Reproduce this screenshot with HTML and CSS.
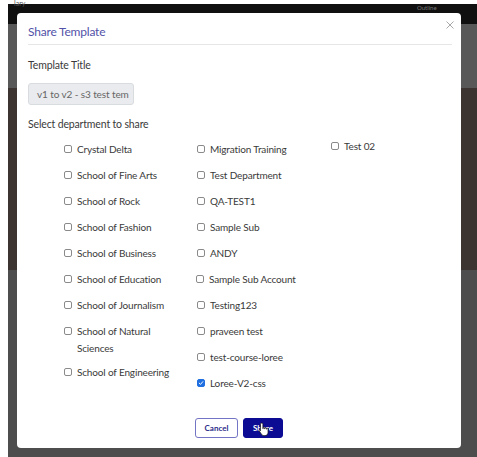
FILE: index.html
```html
<!DOCTYPE html>
<html>
<head>
<meta charset="utf-8">
<link rel="stylesheet" href="styles.css">
</head>
<body>
<div class="screen">
  <div class="top-label">lary</div>
  <div class="outline-label">Outline</div>
  <div class="modal">
    <div class="modal-header">
      <h2 class="modal-title">Share Template</h2>
    </div>
    <span class="close"><svg viewBox="0 0 8 8" width="8" height="8"><path d="M0.5 0.5 L7.5 7.5 M7.5 0.5 L0.5 7.5" stroke="#a8a8a8" stroke-width="1" fill="none"/></svg></span>
    <div class="modal-body">
      <div class="label">Template Title</div>
      <div class="title-input">v1 to v2 - s3 test tem</div>
      <div class="label label-select">Select department to share</div>
      <div class="dept-grid">
        <div class="dept-col">
          <div class="dept"><span class="cb"></span><span class="dept-name">Crystal Delta</span></div>
          <div class="dept"><span class="cb"></span><span class="dept-name">School of Fine Arts</span></div>
          <div class="dept"><span class="cb"></span><span class="dept-name">School of Rock</span></div>
          <div class="dept"><span class="cb"></span><span class="dept-name">School of Fashion</span></div>
          <div class="dept"><span class="cb"></span><span class="dept-name">School of Business</span></div>
          <div class="dept"><span class="cb"></span><span class="dept-name">School of Education</span></div>
          <div class="dept"><span class="cb"></span><span class="dept-name">School of Journalism</span></div>
          <div class="dept dept-wrap"><span class="cb"></span><span class="dept-name">School of Natural Sciences</span></div>
          <div class="dept"><span class="cb"></span><span class="dept-name">School of Engineering</span></div>
        </div>
        <div class="dept-col">
          <div class="dept"><span class="cb"></span><span class="dept-name">Migration Training</span></div>
          <div class="dept"><span class="cb"></span><span class="dept-name">Test Department</span></div>
          <div class="dept"><span class="cb"></span><span class="dept-name">QA-TEST1</span></div>
          <div class="dept"><span class="cb"></span><span class="dept-name">Sample Sub</span></div>
          <div class="dept"><span class="cb"></span><span class="dept-name">ANDY</span></div>
          <div class="dept dept-shift"><span class="cb"></span><span class="dept-name">Sample Sub Account</span></div>
          <div class="dept"><span class="cb"></span><span class="dept-name">Testing123</span></div>
          <div class="dept"><span class="cb"></span><span class="dept-name">praveen test</span></div>
          <div class="dept"><span class="cb"></span><span class="dept-name">test-course-loree</span></div>
          <div class="dept"><span class="cb cb-checked"><svg viewBox="0 0 10 10" width="8" height="8"><path d="M2 5.2 L4.2 7.3 L8 2.8" fill="none" stroke="#fff" stroke-width="1.6" stroke-linecap="round" stroke-linejoin="round"/></svg></span><span class="dept-name">Loree-V2-css</span></div>
        </div>
        <div class="dept-col dept-col-3">
          <div class="dept"><span class="cb"></span><span class="dept-name">Test 02</span></div>
        </div>
      </div>
      <div class="actions">
        <button class="btn btn-cancel">Cancel</button>
        <button class="btn btn-share">Share</button>
        <svg class="cursor" viewBox="0 0 13 17" width="12" height="16"><path d="M4 1 c.8 0 1.3.6 1.3 1.3 V7 h.3 V6.2 c0-.7 1.6-.7 1.6 0 V7.2 h.3 V6.6 c0-.7 1.6-.7 1.6 0 V7.6 h.3 V7.2 c0-.7 1.5-.7 1.5 0 V11 c0 2-1.3 3.6-3.3 3.6 H6.4 c-1.2 0-2-.6-2.7-1.6 L1.2 9.3 c-.4-.6.4-1.4 1-.9 L2.7 9.4 V2.3 C2.7 1.6 3.2 1 4 1z" fill="#fff" stroke="#111" stroke-width="0.8" stroke-linejoin="round"/></svg>
      </div>
    </div>
  </div>
</div>
</body>
</html>
```

FILE: styles.css
```css
html, body {
  margin: 0;
  padding: 0;
  background: #ffffff;
}
body {
  width: 477px;
  height: 457px;
  overflow: hidden;
  font-family: "Lato", "Noto Sans", sans-serif;
}
.screen {
  position: relative;
  margin: 4px 0 0 8px;
  height: 453px;
  padding: 9px 16px 0 9px;
  box-sizing: border-box;
  background: linear-gradient(to bottom,
    #101010 0px, #101010 20px,
    #585858 20px, #585858 84px,
    #3c3431 84px, #3c3431 266px,
    #4d4d4d 266px, #4d4d4d 453px);
}
.top-label {
  position: absolute;
  left: 6px;
  top: -4px;
  font-size: 7px;
  line-height: 7px;
  color: #555;
}
.outline-label {
  position: absolute;
  left: 409px;
  top: 0px;
  font-size: 6px;
  color: #777;
}
.modal {
  position: relative;
  background: #ffffff;
  border-radius: 4px;
  height: 435px;
  padding: 0 9px 0 11px;
  box-sizing: border-box;
}
.modal-header {
  border-bottom: 1px solid #e6e6e6;
  padding: 12px 0 6px 0;
}
.modal-title {
  margin: 0;
  font-size: 12px;
  letter-spacing: -0.2px;
  font-weight: 400;
  line-height: 13px;
  color: #5252a8;
}
.close {
  position: absolute;
  right: 7px;
  top: 8px;
  display: flex;
}
.modal-body {
  padding-top: 13px;
  color: #3a3a3a;
}
.label {
  font-size: 10.5px;
  letter-spacing: -0.15px;
  line-height: 14px;
}
.title-input {
  margin-top: 11px;
  width: 106px;
  height: 22px;
  box-sizing: border-box;
  background: #e9ebee;
  border: 1px solid #d9dcdf;
  border-radius: 3px;
  padding-left: 8px;
  font-size: 10px;
  letter-spacing: -0.1px;
  line-height: 20px;
  color: #666;
  white-space: nowrap;
}
.label-select {
  margin-top: 12px;
}
.dept-grid {
  display: grid;
  grid-template-columns: 133px 134px 100px;
  padding-left: 36px;
  margin-top: 10px;
}
.dept-col {
  display: flex;
  flex-direction: column;
  gap: 9px;
}
.dept-col-3 {
  margin-top: -3px;
}
.dept {
  display: flex;
  align-items: flex-start;
  gap: 5px;
  font-size: 10px;
  letter-spacing: -0.15px;
  line-height: 17px;
}
.dept-wrap {
  margin-bottom: -2px;
}
.dept-shift {
  margin-left: -1px;
}
.cb {
  flex: 0 0 auto;
  width: 8px;
  height: 8px;
  margin-top: 4px;
  border: 1px solid #8a8a8a;
  border-radius: 2px;
  box-sizing: border-box;
  background: #fff;
  display: flex;
  align-items: center;
  justify-content: center;
}
.cb-checked {
  background: #1f6fe0;
  border-color: #1f6fe0;
}
.dept-name {
  color: #3a3a3a;
  max-width: 102px;
}
.actions {
  position: relative;
  display: flex;
  justify-content: center;
  gap: 5px;
  margin-top: 26px;
  padding-right: 2px;
}
.btn {
  height: 20px;
  border-radius: 3px;
  font-family: "Lato", sans-serif;
  font-size: 8px;
  font-weight: 700;
  padding: 0;
}
.btn-cancel {
  width: 43px;
  background: #fff;
  border: 1px solid #7474c4;
  color: #2b2b8a;
}
.btn-share {
  width: 40px;
  background: #0b0b94;
  border: 1px solid #0b0b94;
  color: #fff;
}
.cursor {
  position: absolute;
  left: 230px;
  top: 4px;
}
```
